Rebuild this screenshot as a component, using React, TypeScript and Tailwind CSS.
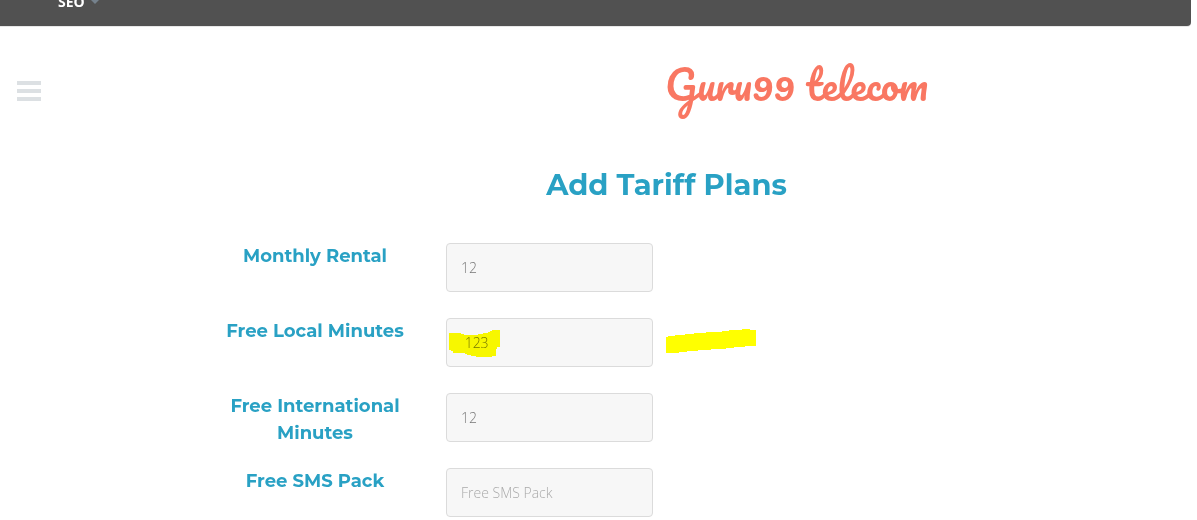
import { useId, useState } from "react";

type Field = { label: string; value: string; marked?: boolean };

const fields: Field[] = [
  { label: "Monthly Rental", value: "12" },
  { label: "Free Local Minutes", value: " 123", marked: true },
  { label: "Free International Minutes", value: "12" },
  { label: "Free SMS Pack", value: "" },
];

function Marks() {
  return (
    <>
      <svg className="pointer-events-none absolute top-3 left-[3px] h-7 w-[51px] mix-blend-multiply" viewBox="0 0 51 28" fill="#ffff00" aria-hidden="true">
        <path d="M0 3h12v1h3v1h14V4h5V3h5V2h2V1h2V0h8v17h-3v2h-1v7h-4v1H27v-1h-5v-1h-4v-1h-2v-1H4v-2H2v-1H0z" />
      </svg>
      <svg className="pointer-events-none absolute top-[11px] left-[220px] h-6 w-[90px]" viewBox="0 0 90 24" fill="#ffff00" aria-hidden="true">
        <path d="M0 8h2V7h7V6h10V5h9V4h12V3h16V2h7V1h13V0h8v1h6v16H79v1H68v1h-8v1H45v1H32v1H21v1h-8v1H0z" />
      </svg>
    </>
  );
}

function FieldRow({ label, value, marked }: Field) {
  const id = useId();
  const [text, setText] = useState(value);
  return (
    <div className="grid min-h-[54px] grid-cols-[222px_1fr] gap-x-5">
      <label htmlFor={id} className="px-5 text-center font-['Montserrat',Inter,sans-serif] text-[18px] leading-[27px] font-bold text-[#29a1c4]">
        {label}
      </label>
      <div className="relative h-[49px] w-[207px]">
        <input
          id={id}
          type="text"
          placeholder={label}
          value={text}
          onChange={(e) => setText(e.target.value)}
          className="h-full w-full rounded-[4px] border border-[#dbdbdb] bg-[#f7f7f7] px-3.5 font-['Open_Sans',sans-serif] text-[14px] font-light text-[#777777] placeholder:text-[#aaaaaa]"
        />
        {marked && <Marks />}
      </div>
    </div>
  );
}

export default function App() {
  return (
    <div className="min-h-screen overflow-x-hidden bg-white">
      <nav className="mr-[6px] flex h-[26px] items-start rounded-br-[4px] bg-[#515151] pl-[58px] shadow-[0_1px_0_#e7e7e7]">
        <button type="button" className="-mt-[9px] flex h-5 items-center gap-1.5 font-['Open_Sans',sans-serif] text-[14px] font-bold text-white">
          SEO
          <svg className="mt-0.5 h-1 w-2" viewBox="0 0 8 4" fill="#75818c" aria-hidden="true">
            <path d="M0 0h8L4 4z" />
          </svg>
        </button>
      </nav>

      <header className="flex pt-10 pl-[17px]">
        <button type="button" aria-label="Menu" className="mt-[15px] flex h-5 w-6 flex-col justify-between">
          <span className="h-1 w-full bg-[#dce0e3]" />
          <span className="h-1 w-full bg-[#dce0e3]" />
          <span className="h-1 w-full bg-[#dce0e3]" />
        </button>
        <a href="#" className="mr-6 ml-auto w-[753px] text-center font-['Pacifico',Lato,cursive] text-[40px] leading-9 text-[#f97762]">
          Guru99 telecom
        </a>
      </header>

      <main className="mt-[59px] pr-6 pl-[204px]">
        <h1 className="pr-11 text-center font-['Montserrat',Inter,sans-serif] text-[29px] leading-12 font-bold text-[#29a1c4]">Add Tariff Plans</h1>
        <form className="mt-[34px] flex flex-col gap-[21px]">
          {fields.map((field) => (
            <FieldRow key={field.label} {...field} />
          ))}
        </form>
      </main>
    </div>
  );
}
